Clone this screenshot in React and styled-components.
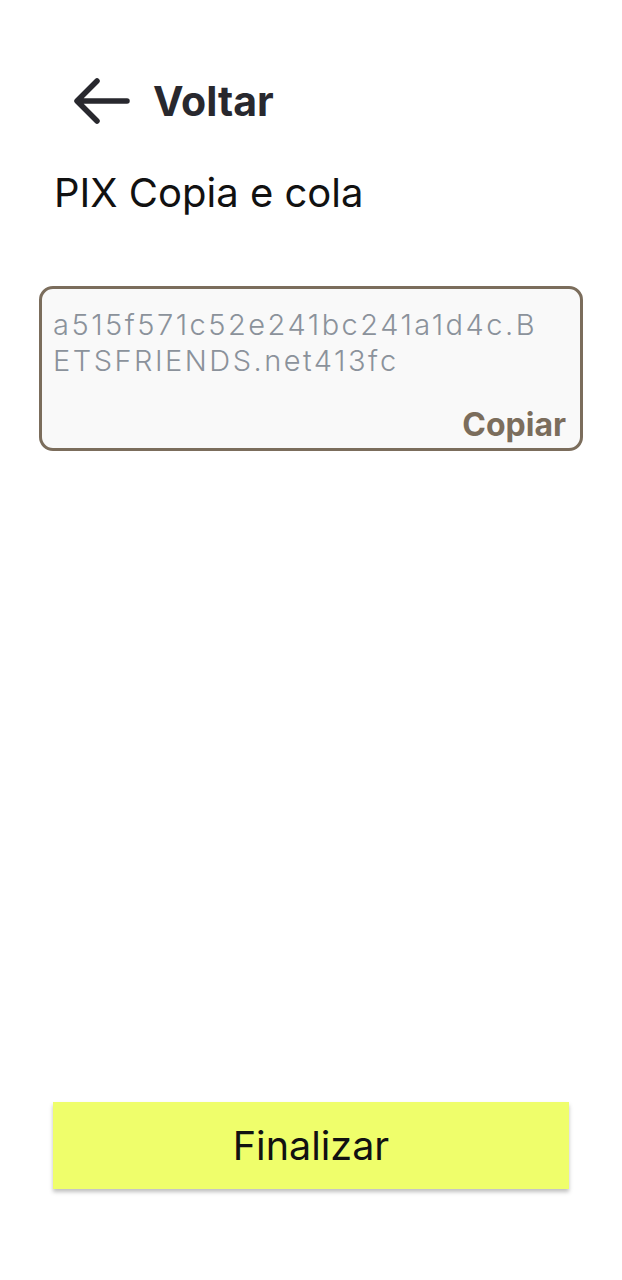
import React from "react";
import styled, { createGlobalStyle } from "styled-components";

const GlobalStyle = createGlobalStyle`
  html, body {
    margin: 0;
    padding: 0;
    background: #ffffff;
  }
`;

const Page = styled.div`
  width: 622px;
  height: 1280px;
  box-sizing: border-box;
  display: flex;
  flex-direction: column;
  padding: 76px 39px 0 39px;
  font-family: Inter, "Noto Sans", sans-serif;
`;

const BackButton = styled.button`
  display: flex;
  align-items: center;
  gap: 22px;
  margin-left: 34px;
  padding: 0;
  border: none;
  background: none;
  color: #28282e;
  font-family: Inter, sans-serif;
  font-weight: 700;
  font-size: 41px;
  cursor: pointer;
`;

const Title = styled.h2`
  margin: 43px 0 0 15px;
  font-weight: 400;
  font-size: 40px;
  line-height: 48px;
  color: #111111;
`;

const CodeBox = styled.div`
  margin-top: 69px;
  height: 165px;
  box-sizing: border-box;
  border: 3px solid #7b6d5c;
  border-radius: 14px;
  background: #f9f9f9;
  padding: 18px 14px 5px 11px;
  display: flex;
  flex-direction: column;
`;

const Code = styled.div`
  max-width: 496px;
  font-family: Inter, sans-serif;
  font-weight: 300;
  font-size: 29px;
  line-height: 36px;
  letter-spacing: 2.5px;
  color: #8b929b;
  word-break: break-all;
  flex: 1;
`;

const CopyButton = styled.button`
  align-self: flex-end;
  padding: 0;
  border: none;
  background: none;
  font-family: Inter, sans-serif;
  font-weight: 700;
  font-size: 32px;
  line-height: 36px;
  color: #7b6d5c;
  cursor: pointer;
`;

const Spacer = styled.div`
  flex: 1;
`;

const FinishButton = styled.button`
  margin: 0 14px 91px 14px;
  height: 87px;
  border: none;
  background: #effe6b;
  box-shadow: 0 3px 4px rgba(0, 0, 0, 0.25);
  font-family: Inter, sans-serif;
  font-weight: 400;
  font-size: 39.5px;
  color: #111111;
  cursor: pointer;
`;

const ArrowLeft = () => (
  <svg width="58" height="48" viewBox="0 0 58 48" fill="none">
    <path
      d="M54 24H5M24 4L4 24l20 20"
      stroke="#28282e"
      strokeWidth="5.5"
      strokeLinecap="round"
      strokeLinejoin="round"
    />
  </svg>
);

const App = () => {
  return (
    <>
      <GlobalStyle />
      <Page>
        <BackButton>
          <ArrowLeft />
          Voltar
        </BackButton>
        <Title>PIX Copia e cola</Title>
        <CodeBox>
          <Code>a515f571c52e241bc241a1d4c.BETSFRIENDS.net413fc</Code>
          <CopyButton>Copiar</CopyButton>
        </CodeBox>
        <Spacer />
        <FinishButton>Finalizar</FinishButton>
      </Page>
    </>
  );
};

export default App;
